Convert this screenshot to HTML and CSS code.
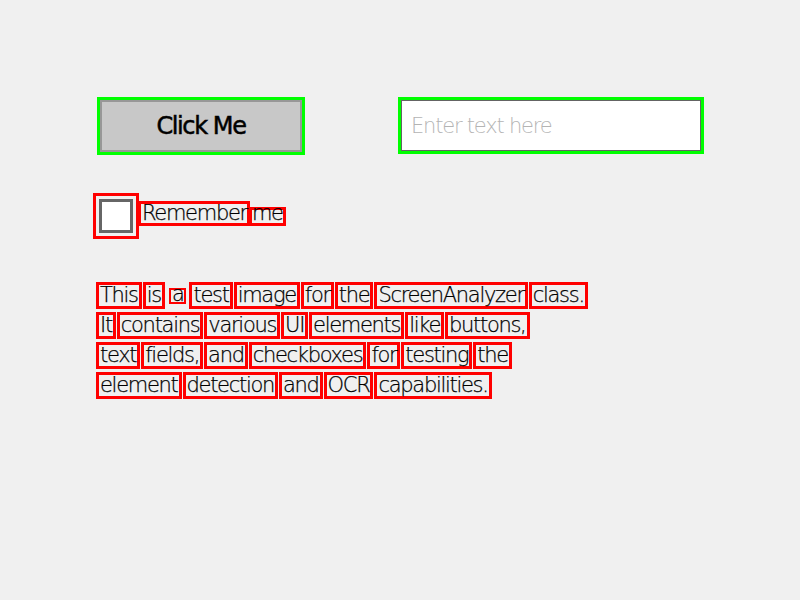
FILE: index.html
```html
<!DOCTYPE html>
<html lang="en">
<head>
<meta charset="utf-8">
<title>ScreenAnalyzer test</title>
<link rel="stylesheet" href="styles.css">
</head>
<body>
<div class="page">
  <div class="top-row">
    <div class="hl hl-button">
      <button class="btn">Click Me</button>
    </div>
    <div class="hl hl-input">
      <input class="field" type="text" placeholder="Enter text here">
    </div>
  </div>

  <div class="check-row">
    <div class="box box-check"><span class="checkbox"></span></div>
    <div class="words-inline">
      <span class="box w-label">Remember</span>
      <span class="box w-label-x">me</span>
    </div>
  </div>

  <div class="para">
    <div class="line">
      <span class="box w">This</span><span class="box w">is</span><span class="box w w-x">a</span><span class="box w">test</span><span class="box w">image</span><span class="box w">for</span><span class="box w">the</span><span class="box w">ScreenAnalyzer</span><span class="box w">class.</span>
    </div>
    <div class="line">
      <span class="box w">It</span><span class="box w">contains</span><span class="box w">various</span><span class="box w">UI</span><span class="box w">elements</span><span class="box w">like</span><span class="box w">buttons,</span>
    </div>
    <div class="line">
      <span class="box w">text</span><span class="box w">fields,</span><span class="box w">and</span><span class="box w">checkboxes</span><span class="box w">for</span><span class="box w">testing</span><span class="box w">the</span>
    </div>
    <div class="line">
      <span class="box w">element</span><span class="box w">detection</span><span class="box w">and</span><span class="box w">OCR</span><span class="box w">capabilities.</span>
    </div>
  </div>
</div>
</body>
</html>
```
FILE: styles.css
```css
html, body {
  margin: 0;
  padding: 0;
  background: #f0f0f0;
}

body {
  width: 800px;
  height: 600px;
  overflow: hidden;
  font-family: "DejaVu Sans", sans-serif;
  font-weight: 200;
  color: #000;
}

.page {
  display: flex;
  flex-direction: column;
  align-items: flex-start;
}

/* green detection outlines */
.hl {
  border: 3px solid #00ff00;
  box-sizing: border-box;
  display: flex;
}

.top-row {
  display: flex;
  gap: 93px;
  margin: 97px 0 0 97px;
}

.hl-button {
  width: 208px;
  height: 58px;
}

.btn {
  width: 202px;
  height: 52px;
  margin: 0;
  padding: 0;
  box-sizing: border-box;
  border: 2px solid #979797;
  background: #c8c8c8;
  font-family: "DejaVu Sans", sans-serif;
  font-weight: 400;
  font-size: 24px;
  line-height: 48px;
  letter-spacing: -1.4px;
  -webkit-text-stroke: 0.5px #000;
  color: #000;
  text-align: center;
}

.hl-input {
  width: 306px;
  height: 57px;
}

.field {
  width: 300px;
  height: 51px;
  margin: 0;
  box-sizing: border-box;
  border: 1px solid #646464;
  background: #fff;
  padding: 0 0 0 9px;
  font-family: "DejaVu Sans", sans-serif;
  font-weight: 200;
  font-size: 21px;
  line-height: 49px;
  letter-spacing: -1.2px;
  outline: none;
}

.field::placeholder {
  color: #b4b4b4;
  opacity: 1;
}

/* red detection boxes */
.box {
  border: 3px solid #ff0000;
  box-sizing: border-box;
}

.check-row {
  display: flex;
  align-items: flex-end;
  margin: 38px 0 0 93px;
}

.box-check {
  width: 46px;
  height: 46px;
  padding: 3px;
}

.checkbox {
  display: block;
  width: 34px;
  height: 34px;
  box-sizing: border-box;
  border: 3px solid #666;
  background: #fff;
}

.words-inline {
  display: flex;
  align-items: flex-end;
  margin: 0 0 13px -1px;
}

.w-label, .w-label-x {
  font-size: 21px;
  letter-spacing: -1.3px;
  white-space: nowrap;
  -webkit-text-stroke: 0.25px #000;
}

.w-label {
  height: 25px;
  padding: 0 0 0 1px;
  line-height: 19px;
}

.w-label-x {
  height: 19px;
  margin-left: -1px;
  padding: 0;
  line-height: 7px;
}

.para {
  display: flex;
  flex-direction: column;
  gap: 3px;
  margin: 43px 0 0 96px;
}

.line {
  display: flex;
  align-items: flex-start;
  gap: 1px;
}

.w {
  height: 27px;
  padding: 0 1px 0 1px;
  font-size: 21px;
  line-height: 21px;
  letter-spacing: -1.3px;
  white-space: nowrap;
  -webkit-text-stroke: 0.25px #000;
}

.w-x {
  height: 16px;
  margin: 6px 2px 0 3px;
  padding: 0 1px;
  border-width: 2px;
  line-height: 9px;
}
```
